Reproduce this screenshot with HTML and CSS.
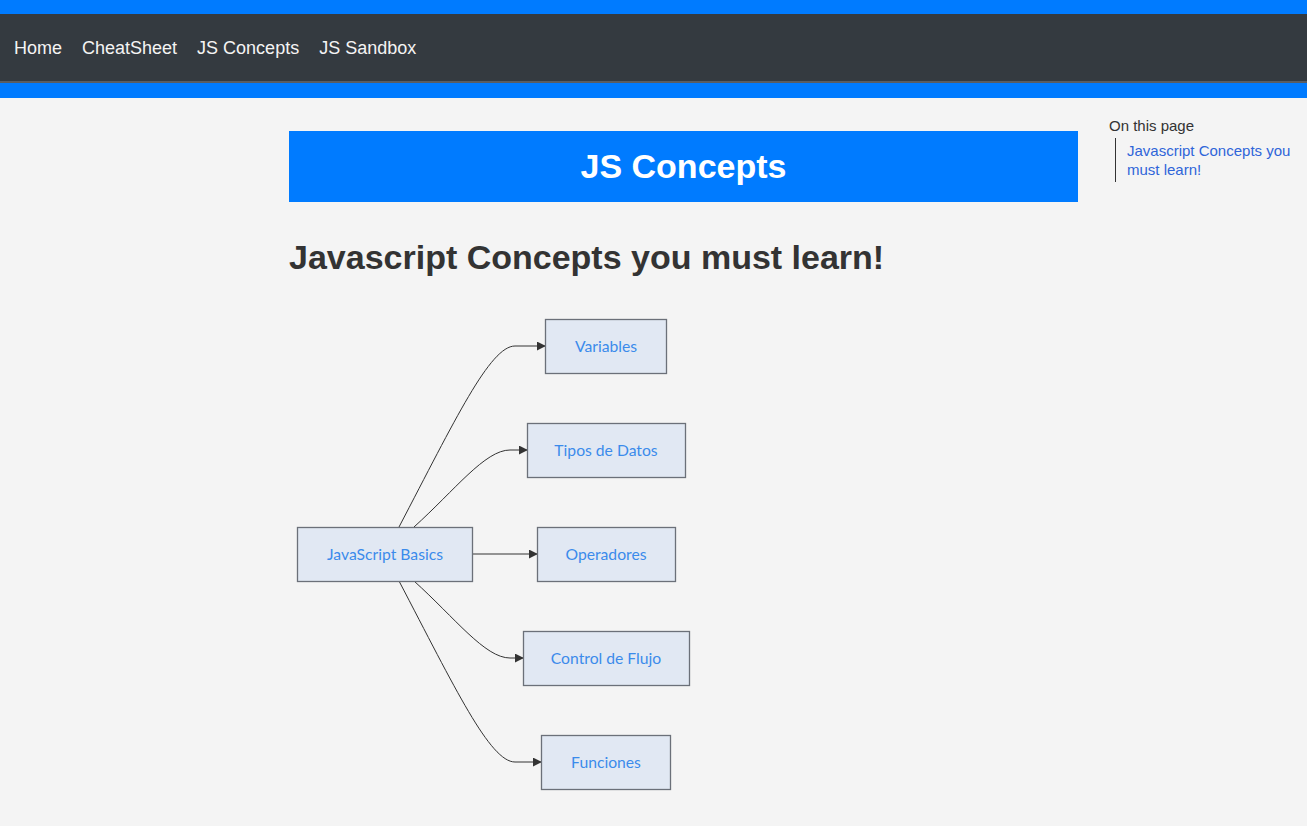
FILE: index.html
```html
<!DOCTYPE html>
<html lang="en">
<head>
<meta charset="utf-8">
<title>JS Concepts</title>
<link rel="stylesheet" href="styles.css">
</head>
<body>
<header class="top">
  <nav class="navbar">
    <a class="nav-link" href="#">Home</a>
    <a class="nav-link" href="#">CheatSheet</a>
    <a class="nav-link" href="#">JS Concepts</a>
    <a class="nav-link" href="#">JS Sandbox</a>
  </nav>
</header>
<div class="layout">
  <main class="main">
    <div class="banner">JS Concepts</div>
    <h2 class="heading">Javascript Concepts you must learn!</h2>
    <svg class="diagram" width="420" height="500" viewBox="289 300 420 500" xmlns="http://www.w3.org/2000/svg">
      <defs>
        <marker id="arrow" viewBox="0 0 10 10" refX="9" refY="5" markerWidth="9" markerHeight="9" markerUnits="userSpaceOnUse" orient="auto">
          <path d="M0,0 L10,5 L0,10 z" fill="#333"/>
        </marker>
      </defs>
      <g class="edges" fill="none" stroke="#333" stroke-width="1">
        <path d="M399,527 C455,420 490,346 515,346 L545,346" marker-end="url(#arrow)"/>
        <path d="M414,527 C455,490 485,450 510,450 L527,450" marker-end="url(#arrow)"/>
        <path d="M472,554 L537,554" marker-end="url(#arrow)"/>
        <path d="M414,581 C455,618 485,658 510,658 L523,658" marker-end="url(#arrow)"/>
        <path d="M399,581 C455,688 490,762 515,762 L541,762" marker-end="url(#arrow)"/>
      </g>
      <g class="nodes">
        <rect x="545.5" y="319.5" width="121" height="54"/>
        <text x="606" y="346">Variables</text>
        <rect x="527.5" y="423.5" width="158" height="54"/>
        <text x="606" y="450">Tipos de Datos</text>
        <rect x="537.5" y="527.5" width="138" height="54"/>
        <text x="606" y="554">Operadores</text>
        <rect x="523.5" y="631.5" width="166" height="54"/>
        <text x="606" y="658">Control de Flujo</text>
        <rect x="541.5" y="735.5" width="129" height="54"/>
        <text x="606" y="762">Funciones</text>
        <rect x="297.5" y="527.5" width="175" height="54"/>
        <text x="385" y="554">JavaScript Basics</text>
      </g>
    </svg>
  </main>
  <aside class="toc">
    <div class="toc-title">On this page</div>
    <ul class="toc-list">
      <li><a class="toc-link" href="#">Javascript Concepts you must learn!</a></li>
    </ul>
  </aside>
</div>
</body>
</html>
```
FILE: styles.css
```css
* { box-sizing: border-box; }
html, body { margin: 0; padding: 0; }
body {
  background: #f4f4f4;
  font-family: "Liberation Sans", Arial, sans-serif;
  color: #333;
}
.top {
  background: #007bff;
  padding: 14px 0 15px;
}
.navbar {
  background: #343a40;
  height: 69px;
  border-bottom: 2px solid #5a5d62;
  display: flex;
  align-items: center;
  gap: 20px;
  padding: 2px 14px 0;
}
.nav-link {
  color: #f4f4f4;
  text-decoration: none;
  font-size: 18px;
}
.layout {
  display: flex;
  padding-left: 289px;
}
.main {
  width: 789px;
  padding-top: 33px;
}
.banner {
  background: #007bff;
  color: #fff;
  height: 71px;
  display: flex;
  align-items: center;
  justify-content: center;
  font-size: 34px;
  font-weight: bold;
}
.heading {
  margin: 35px 0 0;
  font-size: 34px;
  line-height: 40px;
  font-weight: bold;
  color: #333;
}
.diagram {
  display: block;
  margin-top: 23px;
}
.nodes rect {
  fill: #e1e8f3;
  stroke: #6b7079;
  stroke-width: 1.3;
}
.nodes text {
  font-family: Lato, "Noto Sans", sans-serif;
  font-size: 15.7px;
  fill: #3b8beb;
  text-anchor: middle;
  dominant-baseline: central;
}
.toc {
  margin-left: 31px;
  padding-top: 19px;
  width: 190px;
}
.toc-title {
  font-size: 15px;
  line-height: 17px;
  color: #333;
}
.toc-list {
  list-style: none;
  margin: 4px 0 0 6px;
  padding: 3px 0 3px 11px;
  border-left: 1px solid #333;
}
.toc-link {
  color: #2f65d9;
  text-decoration: none;
  font-size: 15px;
  line-height: 19px;
}
```
